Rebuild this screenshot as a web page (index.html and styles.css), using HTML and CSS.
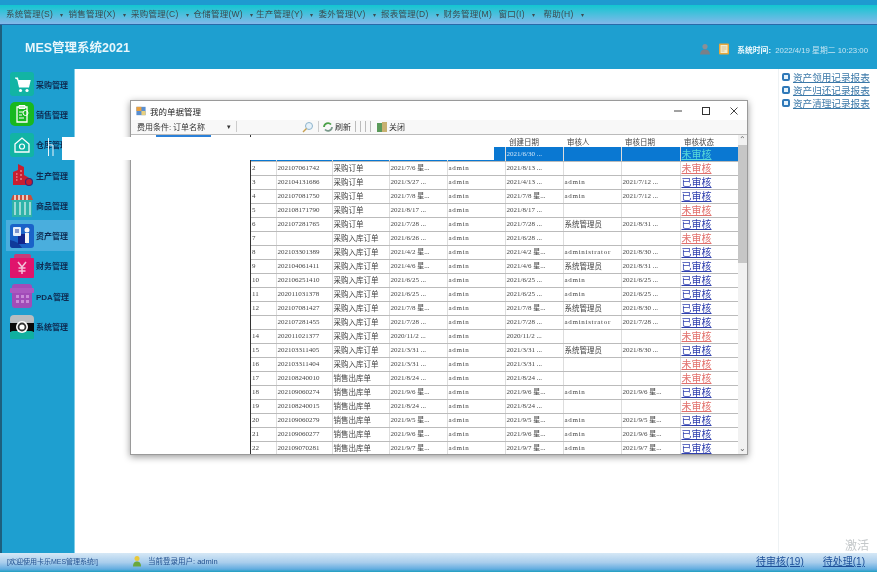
FILE: index.html
```html
<!DOCTYPE html>
<html lang="zh-CN">
<head>
    <meta charset="UTF-8">
    <title>MES管理系统2021</title>
    <link rel="stylesheet" href="styles.css">
</head>
<body>
<div class="page">
    <div class="top-strip"></div>
    <div class="menu">
        <span class="menu-item">系统管理(S)<i>▾</i></span>
        <span class="menu-item">销售管理(X)<i>▾</i></span>
        <span class="menu-item">采购管理(C)<i>▾</i></span>
        <span class="menu-item">仓储管理(W)<i>▾</i></span>
        <span class="menu-item">生产管理(Y)<i>▾</i></span>
        <span class="menu-item">委外管理(V)<i>▾</i></span>
        <span class="menu-item">报表管理(D)<i>▾</i></span>
        <span class="menu-item short">财务管理(M)</span>
        <span class="menu-item tiny">窗口(I)<i>▾</i></span>
        <span class="menu-item tiny">帮助(H)<i>▾</i></span>
    </div>
    <div class="header">
        <div class="logo">MES管理系统2021</div>
        <div class="header-right">
            <svg class="head-icon" viewBox="0 0 12 12"><circle cx="6" cy="3.6" r="2.6" fill="#8a8f96"/><path d="M1 11.5c.5-4 2.5-5 5-5s4.500 1 5 5z" fill="#7a8088"/></svg>
            <svg class="head-icon" viewBox="0 0 12 12"><rect x="1" y="0.500" width="10" height="11" rx="1" fill="#e8a83c"/><rect x="2.500" y="2" width="7" height="8" fill="#f6eccc"/><path d="M3.500 4h5M3.500 6h5M3.500 8h3" stroke="#c9b27a" stroke-width=".7"/></svg>
            <b class="time-label">系统时间:</b>
            <span class="time-value">2022/4/19 星期二 10:23:00</span>
        </div>
    </div>
    <div class="main">
        <div class="sidebar">
            <div class="nav-item">
                <svg class="nav-icon" viewBox="0 0 24 24"><rect width="24" height="24" rx="3" fill="#12b4a4"/><path d="M5 6h2.500l2 9h9l1.500-6.500H8" fill="#fff" stroke="#fff" stroke-width="1.200"/><circle cx="10.500" cy="18.500" r="1.600" fill="#fff"/><circle cx="17" cy="18.500" r="1.600" fill="#fff"/></svg>
                <span>采购管理</span>
            </div>
            <div class="nav-item">
                <svg class="nav-icon" viewBox="0 0 24 24"><rect width="24" height="24" rx="5" fill="#18b820"/><path d="M7 5h10v15H7z" fill="none" stroke="#fff" stroke-width="1.300"/><path d="M9 3.500h6v3H9zM9 10h4M9 13h3M9 16h5" fill="none" stroke="#fff"/><circle cx="15.500" cy="11" r="2.500" fill="none" stroke="#fff"/></svg>
                <span>销售管理</span>
            </div>
            <div class="nav-item">
                <svg class="nav-icon" viewBox="0 0 24 24"><rect width="24" height="24" rx="3" fill="#12b4a4"/><path d="M5 11l7-6 7 6v8H5z" fill="none" stroke="#fff" stroke-width="1.300"/><circle cx="12" cy="13.500" r="2.500" fill="none" stroke="#fff" stroke-width="1.200"/></svg>
                <span>仓库管理</span>
            </div>
            <div class="nav-item">
                <svg class="nav-icon" viewBox="0 0 24 24"><path d="M3 22V9l5-2V1l6 3v18z" fill="#c81e30"/><path d="M14 12l7 4v6h-7z" fill="#c81e30"/><path d="M6 11h1.500M6 14h1.500M6 17h1.500M10 8h2M10 12h2M10 16h2" stroke="#f3b4b8"/><circle cx="19" cy="19" r="3.500" fill="#c81e30" stroke="#3d2a78" stroke-width="1.200"/></svg>
                <span>生产管理</span>
            </div>
            <div class="nav-item">
                <svg class="nav-icon" viewBox="0 0 24 24"><rect x="2" y="7" width="20" height="17" fill="#2fb3a8"/><path d="M1 7l2-5h18l2 5z" fill="#c8503c"/><path d="M5 2v5M9 2v5M13 2v5M17 2v5" stroke="#f4e6dc" stroke-width="1.600"/><path d="M5 9v13M10 9v13M15 9v13M20 9v13" stroke="#e8f4f4" stroke-width="1.200"/></svg>
                <span>商品管理</span>
            </div>
            <div class="nav-item active">
                <svg class="nav-icon" viewBox="0 0 24 24"><rect width="24" height="24" rx="3" fill="#1a62c8"/><path d="M0 16q8 1 12 8H3q-3 0-3-3z" fill="#0f3a9a"/><path d="M8 10h8v10H8z" fill="#12248c"/><rect x="3" y="3" width="8" height="9" rx="1" fill="#e8f0fa"/><path d="M5 6h4M5 8h4" stroke="#1a3aa0"/><circle cx="17" cy="6" r="2.500" fill="#f4f4f4"/><path d="M15 9h4v10h-4z" fill="#f4f4f4"/></svg>
                <span>资产管理</span>
            </div>
            <div class="nav-item">
                <svg class="nav-icon" viewBox="0 0 24 24"><rect x="4" y="0" width="17" height="5" rx="2" fill="#c83a78"/><rect y="4" width="24" height="20" rx="1" fill="#e0146c"/><path d="M8 8l4 5 4-5M12 13v7M8.500 14h7M8.500 17h7" fill="none" stroke="#f4c0d8" stroke-width="1.500"/></svg>
                <span>财务管理</span>
            </div>
            <div class="nav-item">
                <svg class="nav-icon" viewBox="0 0 24 24"><rect x="2" y="0" width="20" height="24" rx="3" fill="#a24cb8"/><rect x="0" y="4" width="24" height="5" rx="1" fill="#ac58c0"/><path d="M6 11h3v3H6zM11 11h3v3h-3zM16 11h3v3h-3zM6 16h3v3H6zM11 16h3v3h-3zM16 16h3v3h-3z" fill="#c98ad8"/></svg>
                <span>PDA管理</span>
            </div>
            <div class="nav-item">
                <svg class="nav-icon" viewBox="0 0 24 24"><rect y="0" width="24" height="10" rx="4" fill="#b9bdc0"/><rect y="8" width="24" height="9" fill="#0a0a0a"/><rect y="16" width="24" height="9" rx="3" fill="#10b0a0"/><circle cx="12" cy="12" r="6" fill="#fff"/><circle cx="12" cy="12" r="3.500" fill="none" stroke="#333" stroke-width="1.800"/></svg>
                <span>系统管理</span>
            </div>
        </div>
        <div class="content">
            <div class="spacer"></div>
            <div class="report-links">
                <a class="report-link"><i></i>资产领用记录报表</a>
                <a class="report-link"><i></i>资产归还记录报表</a>
                <a class="report-link"><i></i>资产清理记录报表</a>
            </div>
        </div>
    </div>
    <div class="status">
        <span class="welcome">[欢迎使用卡乐MES管理系统!]</span>
        <svg class="status-icon" viewBox="0 0 10 12"><circle cx="5" cy="3.500" r="2.500" fill="#e8c83c"/><path d="M1 11.500c0-4 2-5 4-5s4 1 4 5z" fill="#6aa83c"/></svg>
        <span class="login-user">当前登录用户: admin</span>
        <a class="status-link first">待审核(19)</a>
        <a class="status-link">待处理(1)</a>
    </div>

    <div class="watermark">激活</div>

    <div class="dialog">
        <div class="dialog-title">
            <svg class="title-icon" viewBox="0 0 12 12"><rect x="0.500" y="1" width="11" height="10" fill="#5a8fd0"/><rect x="0.500" y="1" width="6" height="5" fill="#e8a040"/><rect x="6.500" y="6" width="5" height="5" fill="#e8d080"/></svg>
            <span>我的单据管理</span>
            <div class="win-buttons">
                <svg viewBox="0 0 10 10"><path d="M1 5h8" stroke="#444"/></svg>
                <svg viewBox="0 0 10 10"><rect x="1.500" y="1.500" width="7" height="7" fill="none" stroke="#333"/></svg>
                <svg viewBox="0 0 10 10"><path d="M1.500 1.500l7 7M8.500 1.500l-7 7" stroke="#444"/></svg>
            </div>
        </div>
        <div class="toolbar">
            <span class="query-label">费用条件:</span>
            <span class="query-value">订单名称</span>
            <span class="query-arrow">▾</span>
            <span class="tool-sep first"></span>
            <svg class="tool-icon" viewBox="0 0 12 12"><circle cx="7" cy="5" r="3.500" fill="#e6f2fa" stroke="#8fb4cc"/><path d="M4.500 7.500L1 11" stroke="#c8a050" stroke-width="1.500"/></svg>
            <span class="tool-sep"></span>
            <svg class="tool-icon" viewBox="0 0 12 12"><path d="M2 6a4 4 0 0 1 7-2.500" fill="none" stroke="#4aa048" stroke-width="1.800"/><path d="M10 6a4 4 0 0 1-7 2.500" fill="none" stroke="#7a9a8c" stroke-width="1.800"/></svg>
            <span class="tool-text">刷新</span>
            <span class="tool-bars"><i></i><i></i><i></i><i></i></span>
            <svg class="tool-icon" viewBox="0 0 12 12"><rect x="1" y="2" width="6" height="9" fill="#5a9a5a"/><rect x="6" y="1" width="5" height="10" fill="#c8b070"/></svg>
            <span class="tool-text">关闭</span>
        </div>
        <div class="dialog-body">
            <div class="tree-panel"><div class="tree-node"></div></div>
            <div class="grid-wrap">
                <table class="grid">
                    <colgroup><col class="c-no"><col class="c-code"><col class="c-type"><col class="c-date"><col class="c-user"><col class="c-date"><col class="c-date"><col class="c-date2"><col class="c-date"></colgroup>
                    <thead><tr><th></th><th></th><th></th><th></th><th></th><th>创建日期</th><th>审核人</th><th>审核日期</th><th>审核状态</th></tr></thead>
                    <tbody>
                        <tr class="selected"><td></td><td></td><td></td><td></td><td></td><td>2021/6/30 ...</td><td></td><td></td><td class="st no">未审核</td></tr>
                        <tr><td>2</td><td>202107061742</td><td class="cn">采购订单</td><td>2021/7/6 星...</td><td>admin</td><td>2021/8/13 ...</td><td></td><td></td><td class="st no">未审核</td></tr>
                        <tr><td>3</td><td>202104131686</td><td class="cn">采购订单</td><td>2021/3/27 ...</td><td>admin</td><td>2021/4/13 ...</td><td>admin</td><td>2021/7/12 ...</td><td class="st yes">已审核</td></tr>
                        <tr><td>4</td><td>202107081750</td><td class="cn">采购订单</td><td>2021/7/8 星...</td><td>admin</td><td>2021/7/8 星...</td><td>admin</td><td>2021/7/12 ...</td><td class="st yes">已审核</td></tr>
                        <tr><td>5</td><td>202108171790</td><td class="cn">采购订单</td><td>2021/8/17 ...</td><td>admin</td><td>2021/8/17 ...</td><td></td><td></td><td class="st no">未审核</td></tr>
                        <tr><td>6</td><td>202107281765</td><td class="cn">采购订单</td><td>2021/7/28 ...</td><td>admin</td><td>2021/7/28 ...</td><td class="cn">系统管理员</td><td>2021/8/31 ...</td><td class="st yes">已审核</td></tr>
                        <tr><td>7</td><td></td><td class="cn">采购入库订单</td><td>2021/6/26 ...</td><td>admin</td><td>2021/6/28 ...</td><td></td><td></td><td class="st no">未审核</td></tr>
                        <tr><td>8</td><td>202103301389</td><td class="cn">采购入库订单</td><td>2021/4/2 星...</td><td>admin</td><td>2021/4/2 星...</td><td>administrator</td><td>2021/8/30 ...</td><td class="st yes">已审核</td></tr>
                        <tr><td>9</td><td>202104061411</td><td class="cn">采购入库订单</td><td>2021/4/6 星...</td><td>admin</td><td>2021/4/6 星...</td><td class="cn">系统管理员</td><td>2021/8/31 ...</td><td class="st yes">已审核</td></tr>
                        <tr><td>10</td><td>202106251410</td><td class="cn">采购入库订单</td><td>2021/6/25 ...</td><td>admin</td><td>2021/6/25 ...</td><td>admin</td><td>2021/6/25 ...</td><td class="st yes">已审核</td></tr>
                        <tr><td>11</td><td>202011031378</td><td class="cn">采购入库订单</td><td>2021/6/25 ...</td><td>admin</td><td>2021/6/25 ...</td><td>admin</td><td>2021/6/25 ...</td><td class="st yes">已审核</td></tr>
                        <tr><td>12</td><td>202107081427</td><td class="cn">采购入库订单</td><td>2021/7/8 星...</td><td>admin</td><td>2021/7/8 星...</td><td class="cn">系统管理员</td><td>2021/8/30 ...</td><td class="st yes">已审核</td></tr>
                        <tr><td></td><td>202107281455</td><td class="cn">采购入库订单</td><td>2021/7/28 ...</td><td>admin</td><td>2021/7/28 ...</td><td>administrator</td><td>2021/7/28 ...</td><td class="st yes">已审核</td></tr>
                        <tr><td>14</td><td>202011021377</td><td class="cn">采购入库订单</td><td>2020/11/2 ...</td><td>admin</td><td>2020/11/2 ...</td><td></td><td></td><td class="st no">未审核</td></tr>
                        <tr><td>15</td><td>202103311405</td><td class="cn">采购入库订单</td><td>2021/3/31 ...</td><td>admin</td><td>2021/3/31 ...</td><td class="cn">系统管理员</td><td>2021/8/30 ...</td><td class="st yes">已审核</td></tr>
                        <tr><td>16</td><td>202103311404</td><td class="cn">采购入库订单</td><td>2021/3/31 ...</td><td>admin</td><td>2021/3/31 ...</td><td></td><td></td><td class="st no">未审核</td></tr>
                        <tr><td>17</td><td>202108240010</td><td class="cn">销售出库单</td><td>2021/8/24 ...</td><td>admin</td><td>2021/8/24 ...</td><td></td><td></td><td class="st no">未审核</td></tr>
                        <tr><td>18</td><td>202109060274</td><td class="cn">销售出库单</td><td>2021/9/6 星...</td><td>admin</td><td>2021/9/6 星...</td><td>admin</td><td>2021/9/6 星...</td><td class="st yes">已审核</td></tr>
                        <tr><td>19</td><td>202108240015</td><td class="cn">销售出库单</td><td>2021/8/24 ...</td><td>admin</td><td>2021/8/24 ...</td><td></td><td></td><td class="st no">未审核</td></tr>
                        <tr><td>20</td><td>202109060279</td><td class="cn">销售出库单</td><td>2021/9/5 星...</td><td>admin</td><td>2021/9/5 星...</td><td>admin</td><td>2021/9/5 星...</td><td class="st yes">已审核</td></tr>
                        <tr><td>21</td><td>202109060277</td><td class="cn">销售出库单</td><td>2021/9/6 星...</td><td>admin</td><td>2021/9/6 星...</td><td>admin</td><td>2021/9/6 星...</td><td class="st yes">已审核</td></tr>
                        <tr><td>22</td><td>202109070281</td><td class="cn">销售出库单</td><td>2021/9/7 星...</td><td>admin</td><td>2021/9/7 星...</td><td>admin</td><td>2021/9/7 星...</td><td class="st yes">已审核</td></tr>
                    </tbody>
                </table>
            </div>
            <div class="scrollbar">
                <span class="scroll-arrow">⌃</span>
                <div class="scroll-thumb"></div>
                <div class="scroll-rest"></div>
                <span class="scroll-arrow">⌄</span>
            </div>
        </div>
    </div>

    <div class="blank-patch"></div>
    <svg class="cursor-mark" viewBox="0 0 8 18"><path d="M1.500 0v18M1.500 7h4.500v11" fill="none" stroke="#eef6fa" stroke-width="1"/></svg>
</div>
</body>
</html>
```

FILE: styles.css
```css
* {
    box-sizing: border-box;
}
html, body {
    margin: 0;
    padding: 0;
}
body {
    font-family: "Liberation Sans", "Noto Sans CJK SC", sans-serif;
    overflow: hidden;
}
a {
    text-decoration: underline;
}
.page {
    position: relative;
    width: 877px;
    height: 572px;
    display: flex;
    flex-direction: column;
    background: #1e9fd0;
    overflow: hidden;
    filter: blur(0.4px);
}

/* top menu */
.top-strip {
    height: 5px;
    background: #1e9ad0;
}
.menu {
    height: 20px;
    display: flex;
    align-items: center;
    padding: 0 0 4px 6px;
    font-size: 8.500px;
    letter-spacing: 0.25px;
    color: #3c4a50;
    background: linear-gradient(#12c6d0, #84b8ea);
    border-bottom: 1px solid #2a6aa8;
}
.menu-item {
    width: 62.500px;
    white-space: nowrap;
}
.menu-item.short {
    width: 55px;
}
.menu-item.tiny {
    width: 45px;
}
.menu-item i {
    font-style: normal;
    font-size: 6px;
    margin-left: 7px;
}

/* header */
.header {
    height: 44px;
    display: flex;
    align-items: center;
    justify-content: space-between;
    padding: 0 9px 2px 25px;
    border-left: 2px solid #1d5f7e;
}
.logo {
    margin-left: -2px;
    color: #e8f6fb;
    font-size: 12.500px;
    font-weight: bold;
}
.header-right {
    display: flex;
    align-items: center;
    margin-top: 6px;
    color: #d8eef8;
    font-size: 7.800px;
}
.head-icon {
    width: 12px;
    height: 12px;
    margin-right: 7px;
}
.time-label {
    margin-right: 6px;
    width: 32px;
    white-space: nowrap;
    color: #f0fafd;
}
.time-value {
    white-space: nowrap;
    color: #c4e4f2;
}

/* sidebar + content */
.main {
    flex: 1;
    display: flex;
    min-height: 0;
}
.sidebar {
    width: 75px;
    border-left: 2px solid #1d5f7e;
    border-right: 1px solid #7ccde8;
}
.nav-item {
    height: 30.300px;
    display: flex;
    align-items: center;
    gap: 2px;
    padding-left: 8px;
    font-size: 8px;
    font-weight: bold;
    color: #0e2a50;
    white-space: nowrap;
}
.nav-item.active {
    margin-left: 4px;
    padding-left: 4px;
    background: #4aaedd;
}
.nav-icon {
    width: 24px;
    height: 24px;
    flex: none;
}
.content {
    flex: 1;
    display: flex;
    background: #fff;
}
.spacer {
    flex: 1;
}
.report-links {
    width: 99px;
    padding: 1px 0 0 3px;
    border-left: 1px solid #eef2f4;
    display: flex;
    flex-direction: column;
}
.report-link {
    height: 13px;
    display: flex;
    align-items: center;
    gap: 3px;
    font-size: 9.600px;
    color: #3b78a8;
    white-space: nowrap;
}
.report-link i {
    width: 8px;
    height: 8px;
    flex: none;
    border: 2px solid #2f78b8;
    border-radius: 2px;
    background: #e4f2fb;
}

/* status bar */
.status {
    height: 19px;
    display: flex;
    align-items: center;
    padding: 0 0 4px 7px;
    font-size: 7.500px;
    color: #23518f;
    background: linear-gradient(#d6e8f6 0%, #a8cdec 50%, #62ace0 85%, #1e9fc0 100%);
}
.welcome {
    width: 125px;
    font-size: 7px;
    white-space: nowrap;
}
.status-icon {
    width: 10px;
    height: 12px;
    margin-right: 6px;
}
.login-user {
    white-space: nowrap;
}
.status-link {
    font-size: 10px;
    color: #1d4f98;
    white-space: nowrap;
    margin-left: 19px;
}
.status-link.first {
    margin-left: auto;
}
.status-link:last-child {
    margin-right: 12px;
}
.watermark {
    position: absolute;
    left: 845px;
    top: 536px;
    font-size: 12px;
    color: #c4c8ca;
}

/* floating window */
.dialog {
    position: absolute;
    left: 130px;
    top: 100px;
    width: 618px;
    height: 355px;
    display: flex;
    flex-direction: column;
    background: #fff;
    border: 1px solid #9a9a9a;
    box-shadow: 0 2px 7px rgba(0, 0, 0, 0.4);
}
.dialog-title {
    height: 19px;
    display: flex;
    align-items: center;
    padding-left: 5px;
    font-size: 8.500px;
    color: #222;
}
.title-icon {
    width: 10px;
    height: 10px;
    margin-right: 4px;
}
.win-buttons {
    margin-left: auto;
    display: flex;
    gap: 18px;
    padding-right: 8px;
}
.win-buttons svg {
    width: 10px;
    height: 10px;
}
.toolbar {
    height: 15px;
    display: flex;
    align-items: center;
    padding: 0 0 1px 6px;
    font-size: 8px;
    color: #333;
    background: #f8f8f8;
    border-bottom: 1px solid #bbb;
}
.query-label {
    width: 36px;
}
.query-value {
    width: 54px;
}
.query-arrow {
    font-size: 7px;
    width: 6px;
}
.tool-sep {
    width: 1px;
    height: 11px;
    background: #ccc;
    margin: 0 3px;
}
.tool-sep.first {
    margin-right: 65px;
}
.tool-icon {
    width: 12px;
    height: 12px;
    margin-right: 1px;
    flex: none;
}
.tool-text {
    width: 17px;
}
.tool-bars {
    display: flex;
    gap: 4px;
    margin: 0 5px 0 3px;
}
.tool-bars i {
    width: 1px;
    height: 11px;
    background: #bbb;
}
.dialog-body {
    flex: 1;
    min-height: 0;
    display: flex;
}
.tree-panel {
    width: 119px;
    flex: none;
}
.tree-node {
    margin-left: 25px;
    width: 55px;
    height: 2px;
    background: #2a80d8;
}
.grid-wrap {
    width: 488px;
    border-left: 1px solid #333;
    overflow: hidden;
}
.grid {
    width: 487px;
    table-layout: fixed;
    border-collapse: collapse;
    font-family: "Liberation Serif", "Noto Sans CJK SC", serif;
    font-size: 7px;
    color: #444;
}
.c-no { width: 25px; }
.c-code { width: 56px; }
.c-type { width: 57px; }
.c-date { width: 58px; }
.c-user { width: 58px; }
.c-date2 { width: 59px; }
.grid th {
    height: 12px;
    padding: 0 0 0 4px;
    font-family: "Noto Sans CJK SC", sans-serif;
    font-size: 7.500px;
    font-weight: normal;
    text-align: left;
    overflow: hidden;
}
.grid td {
    height: 14px;
    padding: 0 0 0 1px;
    line-height: 12px;
    white-space: nowrap;
    overflow: hidden;
    border-right: 1px solid #ddd;
    border-bottom: 1px solid #bbb;
}
.grid td:nth-child(5),
.grid td:nth-child(7) {
    letter-spacing: 0.7px;
}
.grid td.cn {
    font-family: "Noto Sans CJK SC", sans-serif;
    font-size: 7.500px;
    letter-spacing: 0;
}
.grid td.st {
    font-family: "Noto Sans CJK SC", sans-serif;
    font-size: 10px;
    text-decoration: underline;
    border-right: none;
}
.st.no {
    color: #e2706c;
}
.st.yes {
    color: #2f3fae;
}
.grid tr.selected td {
    background: #0a78d2;
    color: #cfe6f8;
}
.grid tr.selected td.st {
    color: #58d8d8;
}
.scrollbar {
    flex: 1;
    display: flex;
    flex-direction: column;
    background: #f1f1f1;
    color: #666;
    font-size: 8px;
    text-align: center;
}
.scroll-arrow {
    height: 10px;
    line-height: 10px;
}
.scroll-thumb {
    height: 118px;
    background: #c6c6c6;
}
.scroll-rest {
    flex: 1;
}

/* things sitting on top of the window */
.blank-patch {
    position: absolute;
    left: 62px;
    top: 137px;
    width: 432px;
    height: 23px;
    background: #fff;
}
.cursor-mark {
    position: absolute;
    left: 47px;
    top: 138px;
    width: 8px;
    height: 18px;
}
```
